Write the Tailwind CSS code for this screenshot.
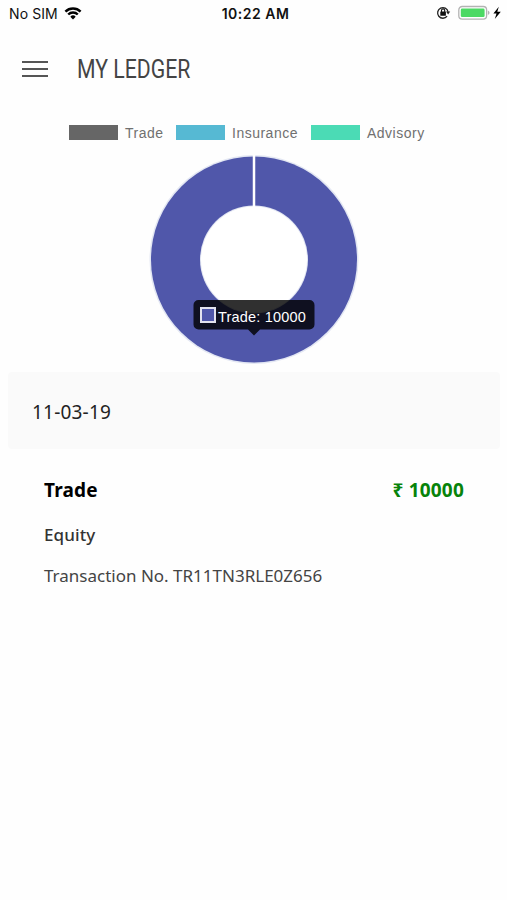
<!DOCTYPE html>
<html lang="en">
<head>
<meta charset="utf-8">
<title>My Ledger</title>
<script src="https://cdn.jsdelivr.net/npm/@tailwindcss/browser@4"></script>
</head>
<body class="bg-[#fefefe] w-[507px] h-[900px] overflow-hidden font-['Noto_Sans',sans-serif]">
<div class="h-7 grid grid-cols-3 items-center pl-[9px] pr-[5px] font-['Inter',sans-serif] text-[#111]">
  <div class="flex items-center gap-[6px]">
    <span class="text-[14px] leading-7 whitespace-nowrap tracking-[0.1px]">No SIM</span>
    <svg class="w-[18px] h-[13px] -mt-[2px]" viewBox="0 0 18 13" fill="none" stroke="#000" stroke-width="2.4"><path d="M1.4 4.6a10.8 10.8 0 0 1 15.2 0M4.2 7.5a6.8 6.8 0 0 1 9.6 0"/><path d="M6.3 9.7a3.800 3.800 0 0 1 5.400 0L9 12.500z" fill="#000" stroke="none"/></svg>
  </div>
  <div class="text-center text-[14px] leading-7 font-semibold tracking-[0.5px] whitespace-nowrap">10:22 AM</div>
  <div class="flex items-center justify-end">
    <svg class="w-[66px] h-[16px] -mt-[2px] -ml-px" viewBox="0 0 66 16">
      <path d="M11.1 11.200A5.300 5.300 0 1 1 12.100 6.800" fill="none" stroke="#222" stroke-width="1.3"/>
      <path d="M10 6.500h4.200l-2.100 2.900z" fill="#222"/>
      <rect x="4.300" y="6.600" width="5.600" height="4.200" rx=".5" fill="#111"/>
      <path d="M5.500 7V5.500a1.600 1.600 0 0 1 3.200 0V7" fill="none" stroke="#111" stroke-width="1.1"/>
      <rect x="22.800" y="1.500" width="27.800" height="12.600" rx="3.400" fill="#fff" stroke="#b3b3b3" stroke-width="1.3"/>
      <rect x="24.800" y="3.500" width="23.800" height="8.600" rx="1.400" fill="#4cd964"/>
      <path d="M51.900 5.600q1.700.7 1.700 2.200t-1.700 2.200z" fill="#b3b3b3"/>
      <path d="M62.800 1.800l-5.400 6.800h3.100l-1.700 5.400 6-7.300h-3.500z" fill="#000"/>
    </svg>
  </div>
</div>
<header class="h-[82px] flex items-center pl-[22px] gap-[29px]">
  <svg class="w-[26px] h-[18px]" viewBox="0 0 26 18" stroke="#555" stroke-width="2"><path d="M0 2h26M0 9h26M0 16h26"/></svg>
  <h1 class="origin-left scale-x-[0.85] pt-[2px] text-[25px] leading-8 font-['Roboto',sans-serif] text-[#444] whitespace-nowrap">MY LEDGER</h1>
</header>
<section class="h-[262px] pt-[15px]">
  <div class="flex h-[15px] pl-[69px] items-center font-['Liberation_Sans',sans-serif] text-[14px] text-[#707070] tracking-[0.5px]">
    <div class="flex items-center w-[107px] gap-[7px]"><i class="w-[49px] h-[15px] bg-[#666]"></i><span class="pt-px">Trade</span></div>
    <div class="flex items-center w-[135px] gap-[7px]"><i class="w-[49px] h-[15px] bg-[#56b9d3]"></i><span class="pt-px">Insurance</span></div>
    <div class="flex items-center gap-[7px]"><i class="w-[49px] h-[15px] bg-[#4bdbb5]"></i><span class="pt-px">Advisory</span></div>
  </div>
  <div class="relative w-[212px] h-[212px] ml-[148px] mt-[13px]">
    <svg class="w-[212px] h-[212px]" viewBox="0 0 212 212">
      <circle cx="106" cy="106.5" r="104.5" fill="#e3e7f3"/>
      <circle cx="106" cy="106.5" r="103" fill="#5057aa"/>
      <circle cx="106" cy="106.5" r="54" fill="#e3e7f3"/>
      <circle cx="106" cy="106.5" r="53" fill="#fff"/>
      <path d="M106 2v52" stroke="#fff" stroke-width="2.5"/>
      <path d="M50.5 147h111a5 5 0 0 1 5 5v19.500a5 5 0 0 1-5 5H112l-6 6-6-6H50.500a5 5 0 0 1-5-5V152a5 5 0 0 1 5-5z" fill="#000" fill-opacity=".81"/>
    </svg>
    <div class="absolute left-[52px] top-[153px] flex items-center gap-[2px] font-['Liberation_Sans',sans-serif] text-[14.500px] leading-[18px] tracking-[0.2px] text-white whitespace-nowrap">
      <i class="w-[16px] h-[16px] border-2 border-[#e3e3ef] bg-[#5057aa]"></i><span class="relative top-[2px]">Trade: 10000</span>
    </div>
  </div>
</section>
<div class="ml-2 w-[492px] h-[77px] bg-[#fafafa] flex items-center pl-6 pt-[3px] rounded-sm">
  <span class="text-[19px] leading-7 tracking-[0.2px] text-[#222]">11-03-19</span>
</div>
<section class="pl-[44px] pr-[43px] pt-[27px]">
  <div class="flex justify-between text-[19px] leading-7 font-bold tracking-[0.2px]"><span class="text-black">Trade</span><span class="text-[#07830a]">₹ 10000</span></div>
  <div class="mt-[19px] text-[17px] leading-6 font-medium tracking-[0.1px] text-[#333]">Equity</div>
  <div class="mt-[17px] text-[17px] leading-6 text-[#444] whitespace-nowrap">Transaction No. TR11TN3RLE0Z656</div>
</section>
</body>
</html>
